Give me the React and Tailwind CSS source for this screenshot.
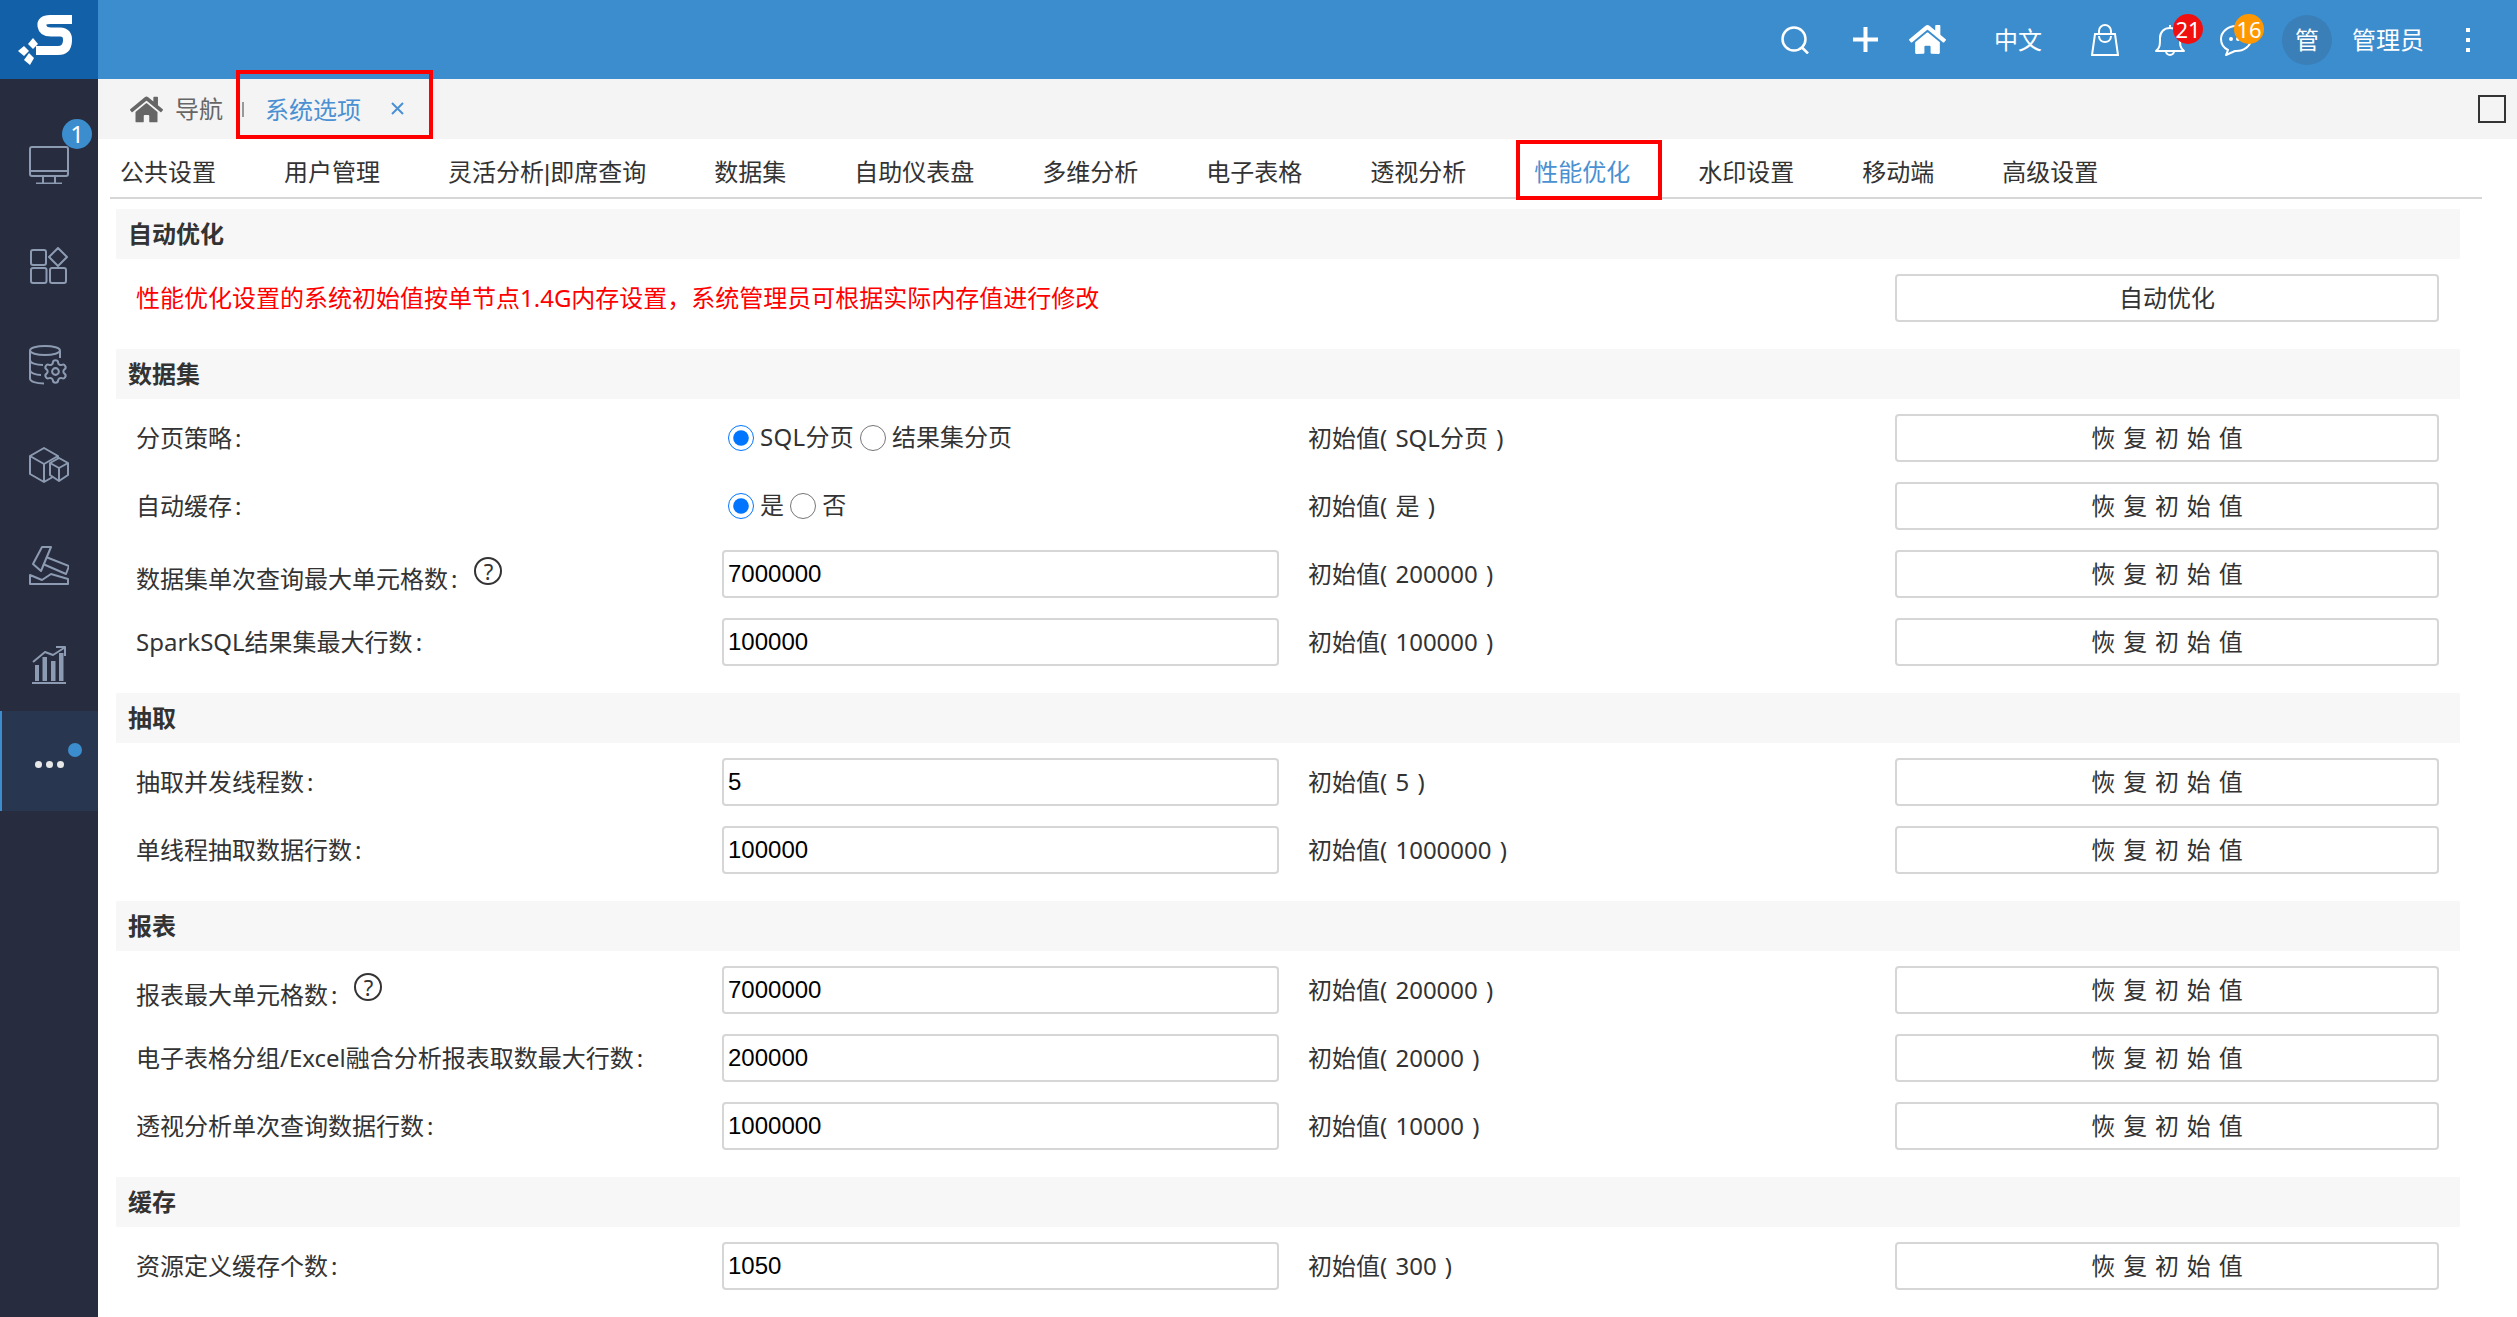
import React from 'react';
import { FaHome } from 'react-icons/fa';
import { Settings } from 'lucide-react';

const tabs = ['公共设置', '用户管理', '灵活分析|即席查询', '数据集', '自助仪表盘', '多维分析', '电子表格', '透视分析', '性能优化', '水印设置', '移动端', '高级设置'];

const sections = [
    {
        title: '数据集',
        rows: [
            { label: '分页策略', radios: ['SQL分页', '结果集分页'], init: '初始值( SQL分页 )' },
            { label: '自动缓存', radios: ['是', '否'], init: '初始值( 是 )' },
            { label: '数据集单次查询最大单元格数', value: '7000000', init: '初始值( 200000 )', help: true },
            { label: 'SparkSQL结果集最大行数', value: '100000', init: '初始值( 100000 )' },
        ],
    },
    {
        title: '抽取',
        rows: [
            { label: '抽取并发线程数', value: '5', init: '初始值( 5 )' },
            { label: '单线程抽取数据行数', value: '100000', init: '初始值( 1000000 )' },
        ],
    },
    {
        title: '报表',
        rows: [
            { label: '报表最大单元格数', value: '7000000', init: '初始值( 200000 )', help: true },
            { label: '电子表格分组/Excel融合分析报表取数最大行数', value: '200000', init: '初始值( 20000 )' },
            { label: '透视分析单次查询数据行数', value: '1000000', init: '初始值( 10000 )' },
        ],
    },
    {
        title: '缓存',
        rows: [
            { label: '资源定义缓存个数', value: '1050', init: '初始值( 300 )' },
        ],
    },
];

function Logo() {
    return (
        <svg width="98" height="79" viewBox="0 0 98 79" fill="none">
            <path d="M72 19.5H50Q41 19.5 42 26Q43 32 51 32H60Q68 32 67.5 41Q67 50.5 58 50.5H36" stroke="#fff" strokeWidth="9" strokeLinejoin="round" />
            <g fill="#fff">
                <path d="M33 38l5 6-5 5-5-5z" />
                <path d="M24 46l5 5-5 5-6-5z" />
                <path d="M29 53l5 5-4 7-6-5z" />
            </g>
        </svg>
    );
}

function SideIcon({ children, w, h }) {
    return (
        <svg width={w} height={h} viewBox={`0 0 ${w} ${h}`} fill="none" stroke="#8c9bb1" strokeWidth="2" strokeLinejoin="round">
            {children}
        </svg>
    );
}

function Sidebar() {
    const Item = ({ children }) => (
        <div className="relative h-[100px] pt-2 flex items-center justify-center">{children}</div>
    );
    return (
        <aside className="w-[98px] shrink-0 bg-[#272c3f] flex flex-col">
            <div className="h-[79px] bg-[#1260a8] shrink-0">
                <Logo />
            </div>
            <div className="pt-8">
                <Item>
                    <SideIcon w={40} h={38}>
                        <rect x="1" y="1" width="38" height="29" rx="2" />
                        <path d="M1 25h38M14 30v7M26 30v7M7 37.5h26" />
                    </SideIcon>
                    <span className="absolute left-[62px] top-[8px] w-[30px] h-[30px] rounded-full bg-[#3c8dce] text-white text-[24px] leading-[30px] text-center">1</span>
                </Item>
                <Item>
                    <SideIcon w={38} h={37}>
                        <rect x="1" y="3" width="15" height="15" rx="2" />
                        <path d="M28 1l9 9-9 9-9-9z" />
                        <rect x="1" y="21" width="15.5" height="15" rx="2" />
                        <rect x="20" y="21" width="16" height="15" rx="2" />
                    </SideIcon>
                </Item>
                <Item>
                    <SideIcon w={40} h={40}>
                        <ellipse cx="16" cy="5.5" rx="15" ry="4.5" />
                        <path d="M1 5.5v28c0 3 6 5 14 5M31 6v7M1 15c0 3 6 5 13 5M1 25c0 3 6 5 11 5" />
                        <Settings x={13} y={13} width={27} height={27} strokeWidth={1.8} color="#8c9bb1" fill="#272c3f" />
                    </SideIcon>
                </Item>
                <Item>
                    <SideIcon w={40} h={36}>
                        <path d="M15 1l14 8v18l-14 8-14-8V9z" />
                        <path d="M1 9l14 8 14-8M15 17v18" />
                        <path d="M30 11l9 5v12l-9 6-9-6V16z" fill="#272c3f" />
                        <path d="M21 16l9 5 9-5M30 21v13" />
                    </SideIcon>
                </Item>
                <Item>
                    <SideIcon w={40} h={39}>
                        <path d="M13 1h9l-10 24-8-7z" />
                        <path d="M17 11l23 9-3 8-23-10" />
                        <path d="M1 29l12 5 9-6 17 5v5H1z" />
                    </SideIcon>
                </Item>
                <Item>
                    <SideIcon w={36} h={38}>
                        <path d="M2 16L14 6l8 3 11-7" />
                        <path d="M25 1h9v9" />
                        <path d="M1 37h34" />
                        <g fill="#8c9bb1" stroke="none">
                            <rect x="4" y="19" width="4" height="16" />
                            <rect x="11.5" y="11" width="4.5" height="24" />
                            <rect x="20" y="15" width="4.5" height="20" />
                            <rect x="28" y="7" width="4.5" height="28" />
                        </g>
                    </SideIcon>
                </Item>
            </div>
            <div className="relative h-[100px] bg-[#28364f] border-l-2 border-[#3c8dce] flex items-center justify-center gap-[4px] pt-[6px] pr-[2px]">
                <span className="w-[7px] h-[7px] rounded-full bg-[#e8e8e8]" />
                <span className="w-[7px] h-[7px] rounded-full bg-[#e8e8e8]" />
                <span className="w-[7px] h-[7px] rounded-full bg-[#e8e8e8]" />
                <span className="absolute left-[66px] top-[32px] w-[14px] h-[14px] rounded-full bg-[#3c8dce]" />
            </div>
        </aside>
    );
}

function Badge({ className, children }) {
    return (
        <span className={`absolute top-[-10px] w-[30px] h-[30px] rounded-full text-white text-[22px] leading-[30px] text-center ${className}`}>
            {children}
        </span>
    );
}

function TopBar() {
    return (
        <header className="h-[79px] shrink-0 bg-[#3c8dce] flex items-center justify-end pr-[47px] text-white text-[24px]">
            <svg width="28" height="28" viewBox="0 0 28 28" fill="none" stroke="#fff" strokeWidth="2.5">
                <circle cx="13" cy="13" r="11.5" />
                <path d="M21 21.5l6 6" />
            </svg>
            <svg className="ml-[44px]" width="25" height="25" viewBox="0 0 25 25" fill="none" stroke="#fff" strokeWidth="4">
                <path d="M0 12.5h25M12.5 0v25" />
            </svg>
            <FaHome className="ml-[31px]" size={37} />
            <span className="ml-[48px]">中文</span>
            <svg className="ml-[49px]" width="28" height="32" viewBox="0 0 28 32" fill="none" stroke="#fff" strokeWidth="2">
                <path d="M4 10h20l3 21H1z" />
                <path d="M8 10V7a6 6 0 0 1 12 0v3M8 12c0 8 12 8 12 0" />
            </svg>
            <span className="relative ml-[36px] flex">
                <svg width="30" height="32" viewBox="0 0 30 32" fill="none" stroke="#fff" strokeWidth="2" strokeLinejoin="round">
                    <path d="M1 27c4-3 4-6 4-13 0-6 4-10 10-10s10 4 10 10c0 7 0 10 4 13z" />
                    <path d="M11 27a4 4 0 0 0 8 0M15 1v3" />
                </svg>
                <Badge className="left-[18px] bg-[#f01010]">21</Badge>
            </span>
            <span className="relative ml-[35px] flex">
                <svg width="32" height="32" viewBox="0 0 32 32" fill="none" stroke="#fff" strokeWidth="2" strokeLinejoin="round">
                    <path d="M16 2C8 2 1 8 1 15c0 5 3 9 7 11l-2 5 9-4h1c8 0 15-5 15-12S24 2 16 2z" />
                    <circle cx="11" cy="15" r="1" fill="#fff" />
                    <circle cx="18" cy="15" r="1" fill="#fff" />
                </svg>
                <Badge className="left-[14px] bg-[#ff9800]">16</Badge>
            </span>
            <span className="ml-[30px] w-[50px] h-[50px] rounded-full bg-[#3a7fb8] flex items-center justify-center">管</span>
            <span className="ml-[20px]">管理员</span>
            <span className="ml-[42px] flex flex-col gap-[6px]">
                <span className="w-1 h-1 bg-white" />
                <span className="w-1 h-1 bg-white" />
                <span className="w-1 h-1 bg-white" />
            </span>
        </header>
    );
}

function Breadcrumb() {
    return (
        <div className="h-[60px] shrink-0 bg-[#f4f4f4] flex items-center text-[24px] pl-[32px] pr-[11px]">
            <FaHome className="text-[#666]" size={33} />
            <span className="ml-[12px] text-[#666]">导航</span>
            <span className="ml-[19px] w-[2px] h-[15px] bg-[#999]" />
            <span className="relative ml-[21px] text-[#4a90d2] flex items-center">
                <span className="pt-[2px]">系统选项</span>
                <svg className="ml-[30px] mt-[-2px]" width="13" height="13" viewBox="0 0 13 13" fill="none" stroke="#4a90d2" strokeWidth="2">
                    <path d="M1 1l11 11M12 1L1 12" />
                </svg>
                <span className="absolute left-[-29px] top-[-20px] w-[197px] h-[69px] border-[4px] border-[#ff0000] pointer-events-none" />
            </span>
            <span className="ml-auto w-[28px] h-[28px] border-2 border-[#333]" />
        </div>
    );
}

function TabLabel({ text }) {
    const [left, right] = text.split('|');
    if (right === undefined) return text;
    return (
        <>
            {left}
            <span className="font-['Liberation_Sans',sans-serif]">|</span>
            {right}
        </>
    );
}

function Tabs() {
    return (
        <div className="h-[60px] shrink-0 ml-3 mr-[35px] border-b-2 border-[#d6d6d6] flex gap-[68px] pl-[10px] text-[24px] text-[#333]">
            {tabs.map(t => (
                <div key={t} className={`relative pt-[16px] leading-[34px] ${t === '性能优化' ? 'text-[#4a90d2]' : ''}`}>
                    <TabLabel text={t} />
                    {t === '性能优化' && (
                        <span className="absolute left-[-18px] right-[-32px] top-[1px] bottom-[-3px] border-[4px] border-[#ff0000]" />
                    )}
                </div>
            ))}
        </div>
    );
}

function SectionTitle({ children }) {
    return (
        <div className="h-[50px] bg-[#f7f7f7] pl-3 flex items-center text-[24px] font-bold text-[#333]">{children}</div>
    );
}

function ResetButton({ children }) {
    return (
        <button className="h-[48px] w-full bg-white border-2 border-[#d6d6d6] rounded-[4px] text-[24px] text-[#333] [word-spacing:1.6px]">{children}</button>
    );
}

function Row({ row }) {
    return (
        <div className="grid grid-cols-[606px_557px_616px_544px] items-center h-[48px] text-[24px] text-[#333]">
            <div className={`pl-5 flex ${row.help ? 'translate-y-[5px]' : ''}`}>
                <span>{row.label}<span className="ml-[3px]">:</span></span>
                {row.help && (
                    <span className="ml-[17px] mt-[-4px] w-[28px] h-[28px] rounded-full border-2 border-[#333] text-[22px] leading-[24px] text-center">?</span>
                )}
            </div>
            {row.radios ? (
                <div className="flex items-center pl-[6px]">
                    <input type="radio" name={row.label} defaultChecked className="w-[26px] h-[26px] m-0 shrink-0" />
                    <span className="ml-[6px] mt-[-2px] tracking-[0.3px]">{row.radios[0]}</span>
                    <input type="radio" name={row.label} className="w-[26px] h-[26px] m-0 ml-[6px] shrink-0" />
                    <span className="ml-[6px] mt-[-2px]">{row.radios[1]}</span>
                </div>
            ) : (
                <input
                    defaultValue={row.value}
                    className="h-[48px] w-full bg-white border-2 border-[#d6d6d6] rounded-[4px] px-1 text-[24px] text-black outline-none font-['Liberation_Sans',sans-serif]"
                />
            )}
            <div className="pl-[29px] [word-spacing:2px]">{row.init}</div>
            <ResetButton>恢 复 初 始 值</ResetButton>
        </div>
    );
}

export default function App() {
    return (
        <div className="h-screen w-screen overflow-hidden flex bg-white font-['Noto_Sans','Noto_Sans_CJK_SC',sans-serif]">
            <Sidebar />
            <div className="flex-1 min-w-0 flex flex-col">
                <TopBar />
                <Breadcrumb />
                <Tabs />
                <div className="pl-[18px] pr-[57px] pt-[10px]">
                    <SectionTitle>自动优化</SectionTitle>
                    <div className="grid grid-cols-[1779px_544px] items-center h-[48px] mt-[15px] mb-[27px]">
                        <div className="pl-5 text-[24px] text-[#ff0000]">性能优化设置的系统初始值按单节点1.4G内存设置，系统管理员可根据实际内存值进行修改</div>
                        <ResetButton>自动优化</ResetButton>
                    </div>
                    {sections.map(s => (
                        <section key={s.title}>
                            <SectionTitle>{s.title}</SectionTitle>
                            <div className="flex flex-col gap-5 mt-[15px] mb-[27px]">
                                {s.rows.map(r => <Row key={r.label} row={r} />)}
                            </div>
                        </section>
                    ))}
                </div>
            </div>
        </div>
    );
}
